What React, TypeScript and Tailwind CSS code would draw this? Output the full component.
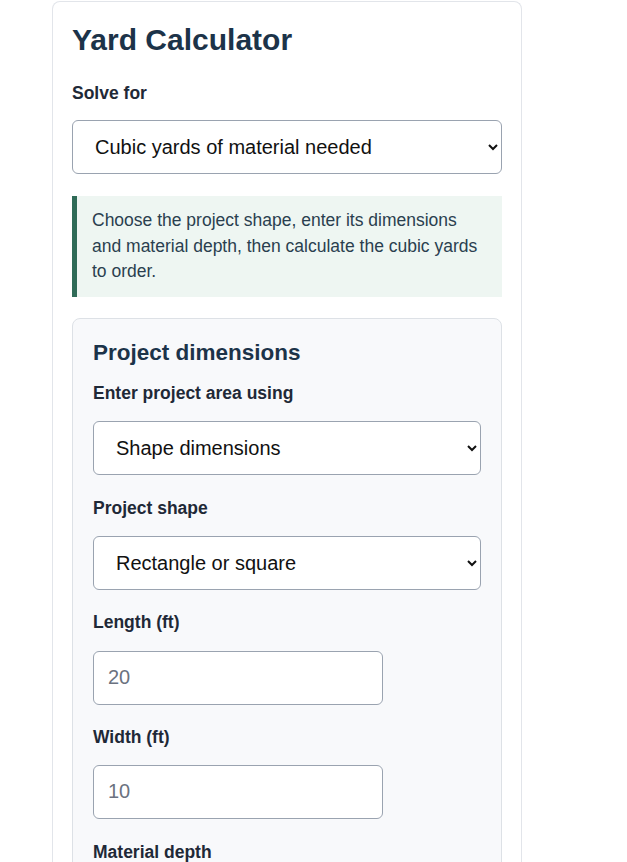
export default function App() {
  const label = "block text-[17.5px] leading-[24px] font-bold text-[#1f2937]";
  const sel = "block w-full h-[54px] rounded-[6px] border border-[#9aa3b0] bg-white pl-[18px] pr-[8px] text-[20px] text-[#111]";
  const inp = "block w-[290px] h-[54px] rounded-[6px] border border-[#9aa3b0] bg-white px-[14px] text-[20px] text-[#6b7280]";
  return (
    <div className="min-h-[862px] bg-white pt-px" style={{ fontFamily: '"Liberation Sans", Arial, sans-serif' }}>
      <div className="ml-[52px] w-[470px] rounded-t-[8px] border border-[#e2e5ea] border-b-0 px-[19px] pt-[21px] pb-[40px]">
        <h1 className="text-[30px] leading-[34px] font-bold text-[#1c3349]">Yard Calculator</h1>
        <label className={label + " mt-[24px] mb-[15px]"}>Solve for</label>
        <select className={sel} defaultValue="a">
          <option value="a">Cubic yards of material needed</option>
        </select>
        <div className="mt-[22px] border-l-[5px] border-[#2f6b57] bg-[#eef6f2] px-[15px] py-[12px] text-[17.5px] leading-[25.5px] text-[#2a3f4f]">
          Choose the project shape, enter its dimensions and material depth, then calculate the cubic yards to order.
        </div>
        <div className="mt-[21px] rounded-[8px] border border-[#dde1e6] bg-[#f8f9fb] px-[20px] pt-[20px] pb-[20px]">
          <h2 className="text-[22.5px] leading-[28px] font-bold text-[#1c3349]">Project dimensions</h2>
          <label className={label + " mt-[14px] mb-[16px]"}>Enter project area using</label>
          <select className={sel} defaultValue="a"><option value="a">Shape dimensions</option></select>
          <label className={label + " mt-[21px] mb-[16px]"}>Project shape</label>
          <select className={sel} defaultValue="a"><option value="a">Rectangle or square</option></select>
          <label className={label + " mt-[20px] mb-[17px]"}>Length (ft)</label>
          <input className={inp} defaultValue="20" />
          <label className={label + " mt-[20px] mb-[16px]"}>Width (ft)</label>
          <input className={inp} defaultValue="10" />
          <label className={label + " mt-[21px] mb-[16px]"}>Material depth</label>
        </div>
      </div>
    </div>
  );
}
